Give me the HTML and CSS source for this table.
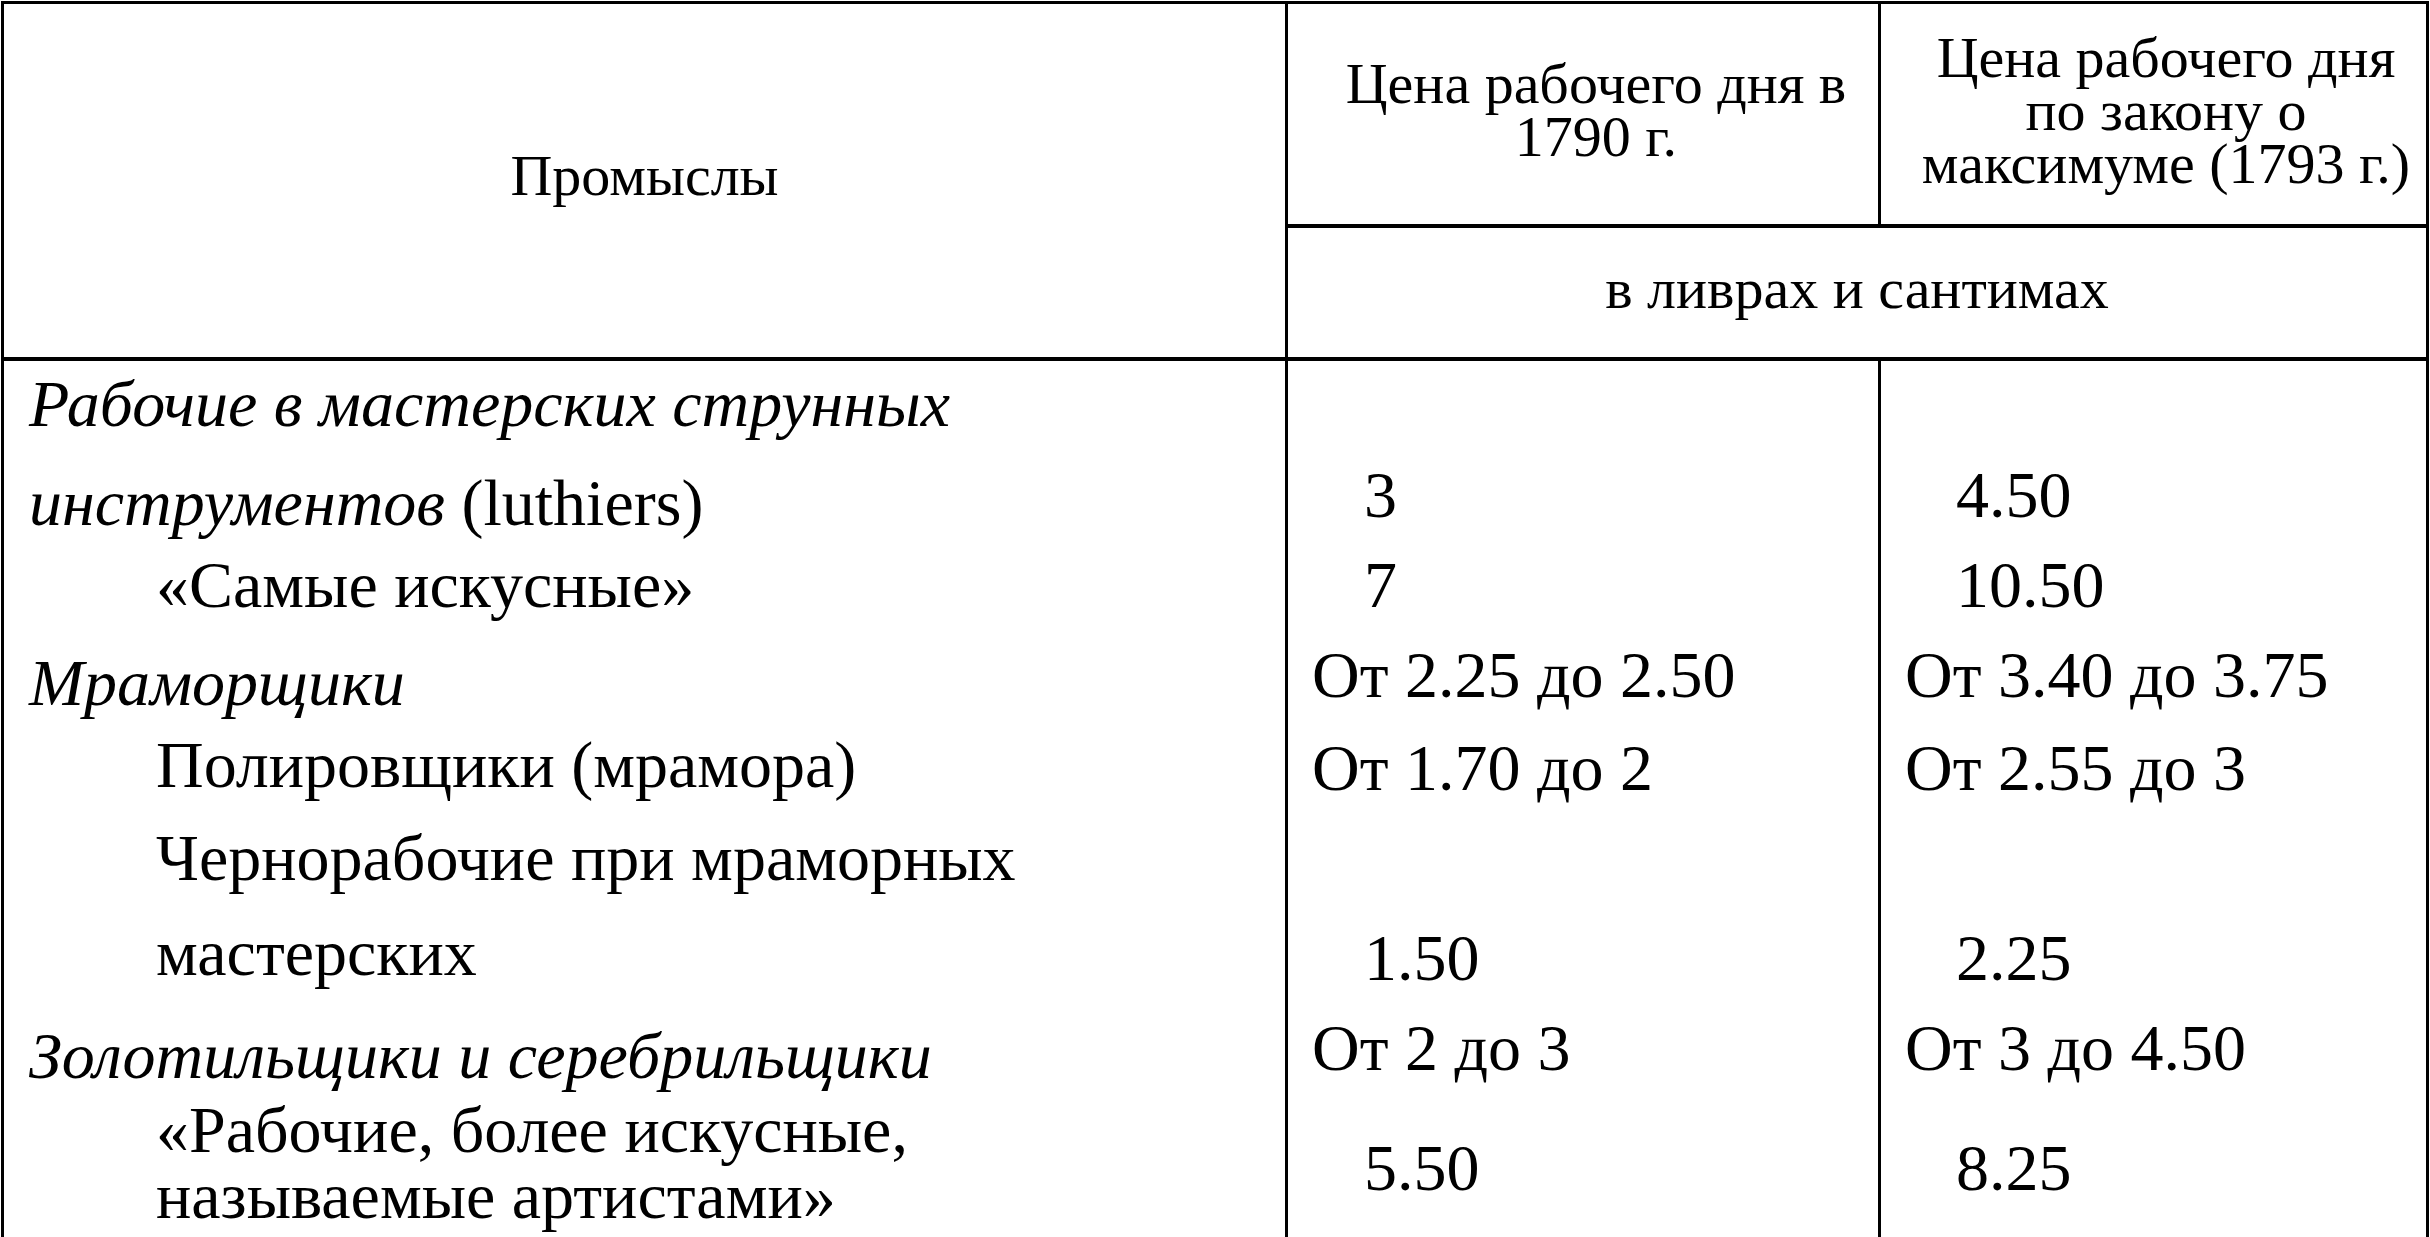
FILE: index.html
```html
<!DOCTYPE html>
<html lang="ru">
<head>
<meta charset="utf-8">
<title>Промыслы</title>
<link rel="stylesheet" href="styles.css">
</head>
<body>
<div class="wage-table">
  <div class="head">
    <div class="h-trade">Промыслы</div>
    <div class="h-price h-1790">Цена рабочего дня в<br>1790 г.</div>
    <div class="h-price h-1793">Цена рабочего дня<br>по закону о<br>максимуме (1793 г.)</div>
    <div class="h-unit">в ливрах и сантимах</div>
  </div>

  <div class="row r1">
    <div class="c trade"><span class="pt10"><em>Рабочие в мастерских струнных</em></span></div>
    <div class="c num"></div>
    <div class="c num"></div>
  </div>
  <div class="row r2">
    <div class="c trade pt8"><em>инструментов</em> (luthiers)</div>
    <div class="c num single">3</div>
    <div class="c num single">4.50</div>
  </div>
  <div class="row r3">
    <div class="c trade sub">«Самые искусные»</div>
    <div class="c num single">7</div>
    <div class="c num single">10.50</div>
  </div>
  <div class="row r4">
    <div class="c trade pt8"><em>Мраморщики</em></div>
    <div class="c num">От 2.25 до 2.50</div>
    <div class="c num">От 3.40 до 3.75</div>
  </div>
  <div class="row r5">
    <div class="c trade sub">Полировщики (мрамора)</div>
    <div class="c num pt3">От 1.70 до 2</div>
    <div class="c num pt3">От 2.55 до 3</div>
  </div>
  <div class="row r6">
    <div class="c trade sub">Чернорабочие при мраморных</div>
    <div class="c num"></div>
    <div class="c num"></div>
  </div>
  <div class="row r7">
    <div class="c trade sub">мастерских</div>
    <div class="c num single pt5">1.50</div>
    <div class="c num single pt5">2.25</div>
  </div>
  <div class="row r8">
    <div class="c trade pt8"><em>Золотильщики и серебрильщики</em></div>
    <div class="c num">От 2 до 3</div>
    <div class="c num">От 3 до 4.50</div>
  </div>
  <div class="row r9">
    <div class="c trade sub">«Рабочие, более искусные,<br>называемые артистами»</div>
    <div class="c num single pt38">5.50</div>
    <div class="c num single pt38">8.25</div>
  </div>
</div>
</body>
</html>
```

FILE: styles.css
```css
html, body {
  margin: 0;
  padding: 0;
  background: #fff;
  overflow: hidden;
}

body {
  font-family: "Liberation Serif", "Times New Roman", serif;
  color: #000;
}

.wage-table {
  margin: 1px 0 0 1px;
  width: 2428px;
  box-sizing: border-box;
  border-top: 3px solid #000;
  border-left: 3px solid #000;
  border-right: 3px solid #000;
}

/* ---------- header ---------- */
.head {
  display: grid;
  grid-template-columns: 1281px 593px 548px;
  grid-template-rows: 224px 133px;
  font-size: 58px;
  line-height: 53px;
  text-align: center;
}

.head > div {
  box-sizing: border-box;
  display: flex;
  align-items: center;
  justify-content: center;
}

.h-trade {
  grid-row: 1 / 3;
  grid-column: 1;
  border-bottom: 4px solid #000;
  padding-bottom: 10px;
}

.h-price {
  grid-row: 1;
  border-left: 3px solid #000;
  border-bottom: 4px solid #000;
  padding-bottom: 8px;
}

.h-1790 {
  grid-column: 2;
  padding-left: 26px;
}

.h-1793 {
  grid-column: 3;
  padding-left: 25px;
}

.h-unit {
  grid-row: 2;
  grid-column: 2 / 4;
  border-left: 3px solid #000;
  border-bottom: 4px solid #000;
  padding-bottom: 8px;
}

/* ---------- body rows ---------- */
.row {
  display: grid;
  grid-template-columns: 1281px 593px 548px;
  font-size: 66px;
  line-height: 66px;
}

.c {
  box-sizing: border-box;
  white-space: nowrap;
}

.trade {
  padding-left: 25px;
}

.trade.sub {
  padding-left: 152px;
}

.num {
  border-left: 3px solid #000;
  padding-left: 24px;
}

.row .num:last-child {
  padding-left: 24px;
}

.num.single {
  padding-left: 76px;
}

.row .num.single:last-child {
  padding-left: 75px;
}

.pt3 { padding-top: 3px; }
.pt5 { padding-top: 5px; }
.pt8 { padding-top: 8px; }
.pt38 { padding-top: 38px; }
.pt10 { display: block; padding-top: 10px; }

.r1 { height: 101px; }
.r2 { height: 90px; }
.r3 { height: 90px; }
.r4 { height: 90px; }
.r5 { height: 93px; }
.r6 { height: 95px; }
.r7 { height: 95px; }
.r8 { height: 82px; }
.r9 { height: 140px; }

em {
  font-style: italic;
}
```
